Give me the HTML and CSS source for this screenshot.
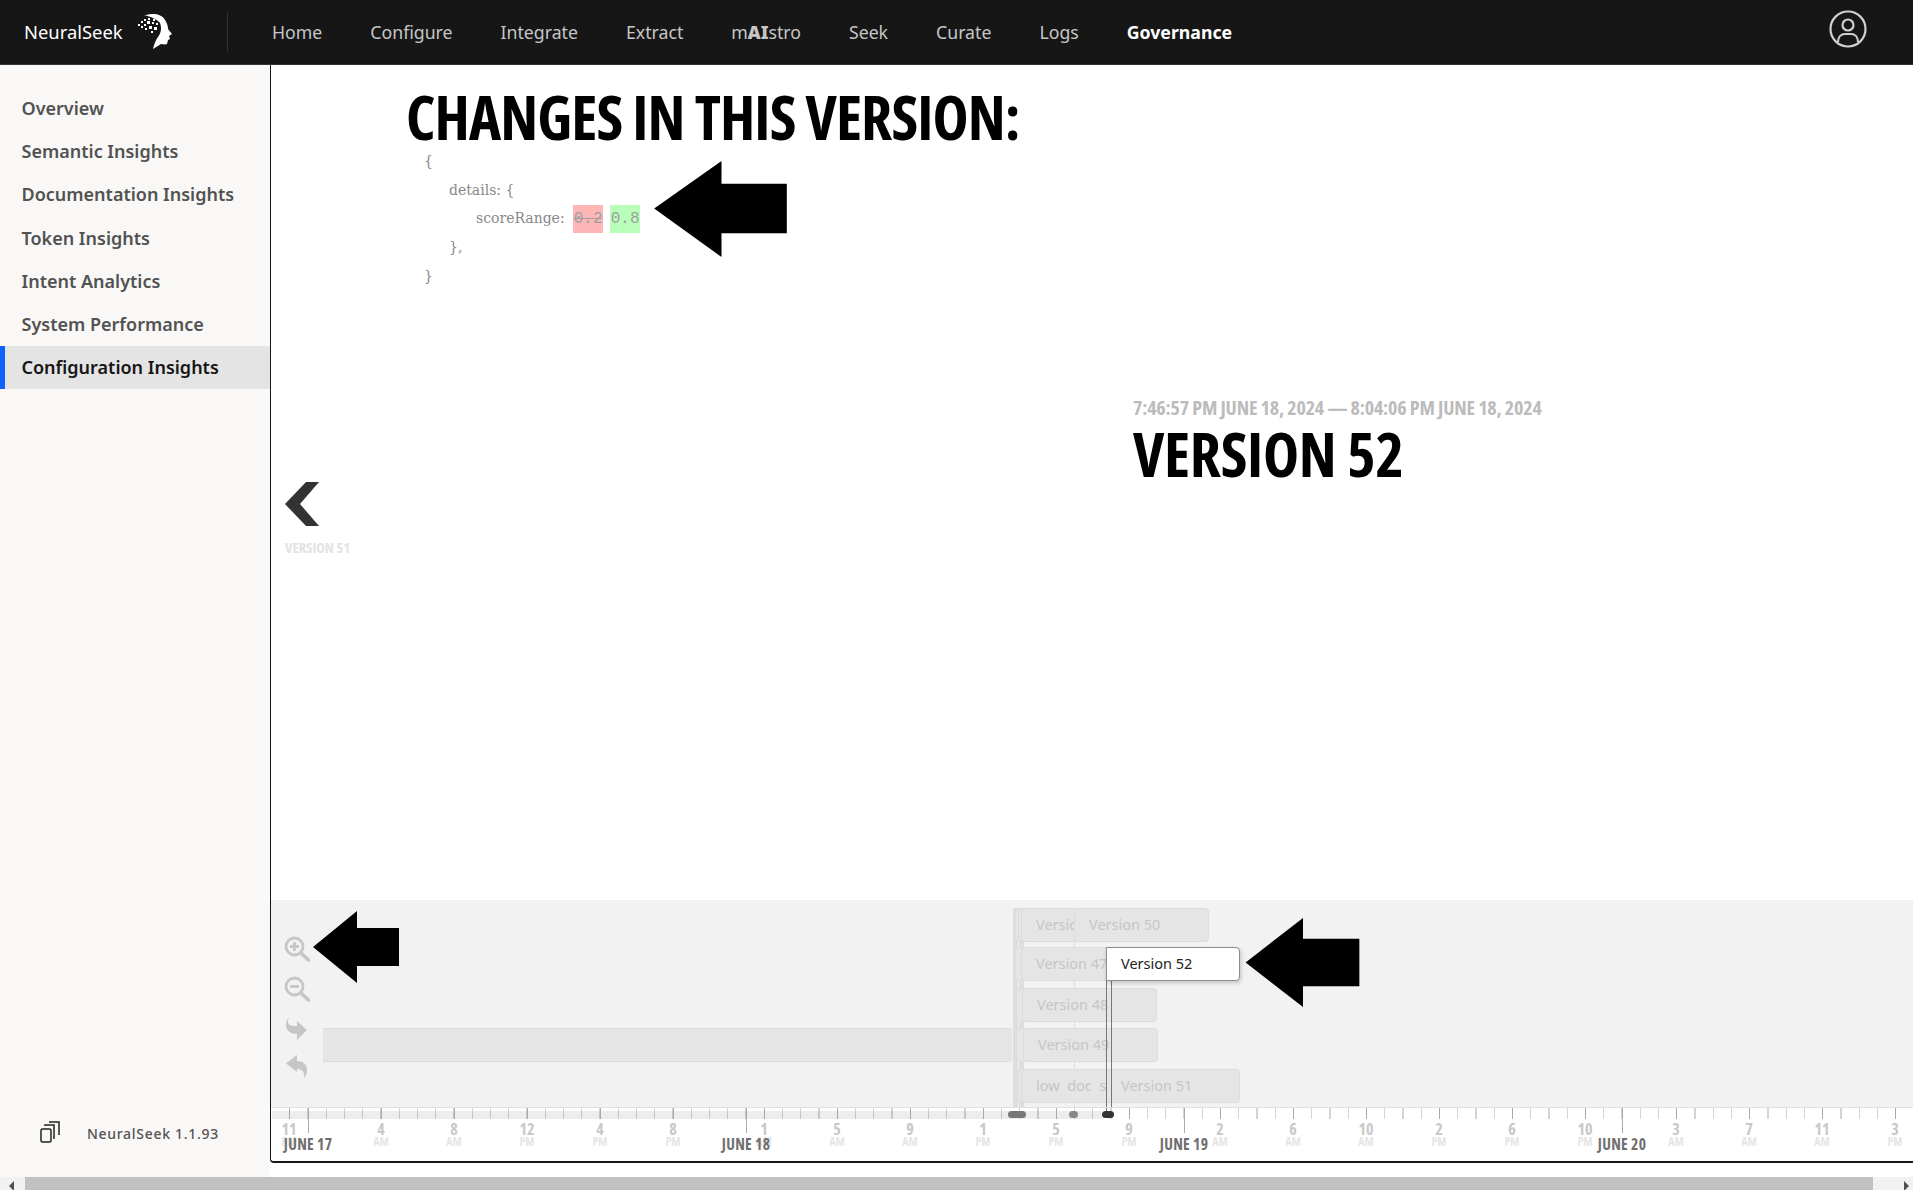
FILE: index.html
```html
<!DOCTYPE html>
<html lang="en">
<head>
    <meta charset="UTF-8">
    <meta name="viewport" content="width=device-width, initial-scale=1.0">
    <title>NeuralSeek - Configuration Insights</title>
    <link rel="stylesheet" href="styles.css">
</head>
<body>
    <!-- Top bar -->
    <header class="topbar">
        <div class="brand">
            <span class="brand-name">NeuralSeek</span>
            <svg class="brand-logo" viewBox="0 0 35 36" width="35" height="36">
                <path fill="#fff" d="M8 1C15-1 24 0 27 6c2 3 3 6 3 9l4 5-3 2 1 3-2 1-1 4c-2 1-4 0-6 0l-8 5c1-4 2-8 5-12 3-4 4-9 2-14-2-3-8-6-16-8z"/>
                <g fill="#fff">
                    <rect x="0" y="10" width="2" height="2"/><rect x="3" y="7" width="2" height="2"/><rect x="3" y="12" width="2" height="2"/>
                    <rect x="6" y="5" width="2" height="2"/><rect x="6" y="10" width="2" height="2"/><rect x="7" y="14" width="2" height="2"/>
                    <rect x="9" y="7" width="3" height="3"/><rect x="10" y="4" width="2" height="2"/><rect x="11" y="12" width="3" height="3"/>
                    <rect x="14" y="8" width="2" height="2"/><rect x="16" y="13" width="3" height="3"/><rect x="15" y="5" width="2" height="2"/>
                    <rect x="13" y="17" width="2" height="2"/><rect x="18" y="9" width="2" height="2"/>
                </g>
            </svg>
        </div>
        <nav class="topnav">
            <a href="#">Home</a>
            <a href="#">Configure</a>
            <a href="#">Integrate</a>
            <a href="#">Extract</a>
            <a href="#">m<b class="ai">AI</b>stro</a>
            <a href="#">Seek</a>
            <a href="#">Curate</a>
            <a href="#">Logs</a>
            <a href="#" class="current">Governance</a>
        </nav>
        <svg class="avatar" viewBox="0 0 40 40" width="40" height="40" fill="none" stroke="#d0d0d0" stroke-width="2.2">
            <circle cx="20" cy="20" r="17.5"/>
            <circle cx="20" cy="16" r="5.5"/>
            <path d="M10 33c0-5 3-8 7-8h6c4 0 7 3 7 8"/>
        </svg>
    </header>

    <div class="page">
        <!-- Sidebar -->
        <aside class="sidebar">
            <a href="#">Overview</a>
            <a href="#">Semantic Insights</a>
            <a href="#">Documentation Insights</a>
            <a href="#">Token Insights</a>
            <a href="#">Intent Analytics</a>
            <a href="#">System Performance</a>
            <a href="#" class="active">Configuration Insights</a>
            <div class="side-footer">
                <svg viewBox="0 0 20 22" width="20" height="22" fill="none" stroke="#222" stroke-width="1.5">
                    <rect x="1" y="8" width="10" height="13" rx="1.5"/>
                    <path d="M5 5V4h9v13h-1"/>
                    <path d="M9 1h10v13"/>
                </svg>
                <span>NeuralSeek 1.1.93</span>
            </div>
        </aside>

        <!-- Content -->
        <main class="main">
            <div class="frame">
                <section class="story">
                    <h1>CHANGES IN THIS VERSION:</h1>
                    <div class="diff">
                        <div>{</div>
                        <div class="in1">details: {</div>
                        <div class="in2">scoreRange: <del>0.2</del><ins>0.8</ins></div>
                        <div class="in1">},</div>
                        <div>}</div>
                    </div>
                    <svg class="callout callout-diff" viewBox="0 0 134 97" width="133" height="96"><path d="M0 48 68 0v23h66v50H68v24z"/></svg>

                    <div class="slide-row">
                        <a href="#" class="prev">
                            <svg viewBox="0 0 34 44" width="34" height="44"><path fill="#333" d="M21 0h13L15 22l19 22H21L0 22z"/></svg>
                            <span>VERSION 51</span>
                        </a>
                        <div class="slide-title">
                            <div class="slide-date">7:46:57 PM JUNE 18, 2024 &mdash; 8:04:06 PM JUNE 18, 2024</div>
                            <h2>VERSION 52</h2>
                        </div>
                    </div>
                </section>

                <!-- Timeline -->
                <section class="timeline">
                    <div class="tl-canvas">
                        <div class="lane-line" style="left:741px;height:200px"></div>
                        <div class="lane-line" style="left:747px;height:200px"></div>
                        <div class="lane-line" style="left:802px;top:42px;height:166px;width:1px"></div>

                        <div class="ver" style="left:743px;top:8px;width:140px"></div>
                        <div class="ver" style="left:746px;top:8px;width:140px"></div>
                        <div class="ver" style="left:749px;top:8px;width:140px">Version 46</div>
                        <div class="ver" style="left:802px;top:8px;width:135px">Version 50</div>

                        <div class="ver" style="left:743px;top:47px;width:130px"></div>
                        <div class="ver" style="left:749px;top:47px;width:136px">Version 47</div>

                        <div class="ver" style="left:744px;top:88px;width:130px"></div>
                        <div class="ver" style="left:750px;top:88px;width:135px">Version 48</div>

                        <div class="ver ver-long" style="left:51px;top:128px;width:689px"></div>
                        <div class="ver" style="left:744px;top:128px;width:130px"></div>
                        <div class="ver" style="left:751px;top:128px;width:135px">Version 49</div>

                        <div class="ver" style="left:745px;top:169px;width:130px"></div>
                        <div class="ver" style="left:749px;top:169px;width:150px">low&nbsp; doc&nbsp; s</div>
                        <div class="ver" style="left:834px;top:169px;width:134px">Version 51</div>

                        <div class="pole" style="left:834px"></div>
                        <div class="pole" style="left:839px"></div>
                        <div class="ver ver-on" style="left:834px;top:47px;width:134px">Version 52</div>
                    </div>

                    <div class="tl-tools">
                        <svg viewBox="0 0 26 26" width="26" height="26" fill="none" stroke="#c6c6c6" stroke-width="2.8">
                            <circle cx="10.5" cy="10.5" r="8.5"/><path d="M17 17l7.5 7" stroke-width="3.6" stroke-linecap="round"/><path d="M10.5 6v9M6 10.5h9"/>
                        </svg>
                        <svg viewBox="0 0 26 26" width="26" height="26" fill="none" stroke="#c6c6c6" stroke-width="2.8">
                            <circle cx="10.5" cy="10.5" r="8.5"/><path d="M17 17l7.5 7" stroke-width="3.6" stroke-linecap="round"/><path d="M6 10.5h9"/>
                        </svg>
                        <svg class="tool-redo" viewBox="0 0 22 24" width="22" height="24"><path fill="#c6c6c6" d="M3 0C1 4 2 7 4 8c2 1 4 1 7 1V4l10 9-10 10v-6C5 17 0 14 0 8c0-3 1-6 3-8z"/></svg>
                        <svg viewBox="0 0 22 24" width="22" height="24"><path fill="#c6c6c6" d="M11 0v6c7 0 10 4 10 9 0 3-1 6-3 8 1-6-2-9-7-9v3L0 8.5z"/></svg>
                    </div>
                    <svg class="callout callout-zoom" viewBox="0 0 86 72" width="86" height="72"><path d="M0 36 44 0v17h42v38H44v17z"/></svg>
                    <svg class="callout callout-ver" viewBox="0 0 115 90" width="115" height="89"><path d="M0 45 58 0v21h57v48H58v21z"/></svg>

                    <div class="axis">
                        <div class="axis-band"></div>
                        <i class="dot" style="left:736px;width:18px;background:#777"></i>
                        <i class="dot" style="left:797px;width:9px;background:#888"></i>
                        <i class="dot" style="left:830px;width:12px;background:#333"></i>

                        <div class="hr" style="left:17px"><b>11</b><small>PM</small></div>
                        <div class="hr" style="left:109px"><b>4</b><small>AM</small></div>
                        <div class="hr" style="left:182px"><b>8</b><small>AM</small></div>
                        <div class="hr" style="left:255px"><b>12</b><small>PM</small></div>
                        <div class="hr" style="left:328px"><b>4</b><small>PM</small></div>
                        <div class="hr" style="left:401px"><b>8</b><small>PM</small></div>
                        <div class="hr" style="left:492px"><b>1</b><small>AM</small></div>
                        <div class="hr" style="left:565px"><b>5</b><small>AM</small></div>
                        <div class="hr" style="left:638px"><b>9</b><small>AM</small></div>
                        <div class="hr" style="left:711px"><b>1</b><small>PM</small></div>
                        <div class="hr" style="left:784px"><b>5</b><small>PM</small></div>
                        <div class="hr" style="left:857px"><b>9</b><small>PM</small></div>
                        <div class="hr" style="left:948px"><b>2</b><small>AM</small></div>
                        <div class="hr" style="left:1021px"><b>6</b><small>AM</small></div>
                        <div class="hr" style="left:1094px"><b>10</b><small>AM</small></div>
                        <div class="hr" style="left:1167px"><b>2</b><small>PM</small></div>
                        <div class="hr" style="left:1240px"><b>6</b><small>PM</small></div>
                        <div class="hr" style="left:1313px"><b>10</b><small>PM</small></div>
                        <div class="hr" style="left:1404px"><b>3</b><small>AM</small></div>
                        <div class="hr" style="left:1477px"><b>7</b><small>AM</small></div>
                        <div class="hr" style="left:1550px"><b>11</b><small>AM</small></div>
                        <div class="hr" style="left:1623px"><b>3</b><small>PM</small></div>

                        <div class="day" style="left:36px"><span>JUNE 17</span></div>
                        <div class="day" style="left:474px"><span>JUNE 18</span></div>
                        <div class="day" style="left:912px"><span>JUNE 19</span></div>
                        <div class="day" style="left:1350px"><span>JUNE 20</span></div>
                    </div>
                </section>
            </div>
        </main>
    </div>

    <!-- Page scrollbar -->
    <div class="hscroll">
        <i class="arrow-l"></i>
        <div class="thumb"></div>
        <i class="arrow-r"></i>
    </div>
</body>
</html>
```

FILE: styles.css
```css
* {
    box-sizing: border-box;
}

html, body {
    margin: 0;
    height: 100%;
}

body {
    display: flex;
    flex-direction: column;
    height: 1190px;
    overflow: hidden;
    background: #fff;
    font-family: "Noto Sans", "Roboto", sans-serif;
}

a {
    text-decoration: none;
    color: inherit;
}

/* Top bar */
.topbar {
    display: flex;
    align-items: center;
    height: 65px;
    flex: none;
    background: #161616;
    border-bottom: 1px solid #333;
}

.brand {
    display: flex;
    align-items: center;
    width: 228px;
    height: 40px;
    padding-left: 24px;
    border-right: 1px solid #333;
}

.brand-name {
    color: #fff;
    font-size: 18.4px;
    width: 114px;
    margin-top: -2px;
}

.topnav {
    display: flex;
    margin-left: 44px;
    gap: 48px;
    font-size: 17.7px;
    color: #c6c6c6;
}

.topnav .ai {
    font-weight: 900;
}

.topnav .current {
    color: #fff;
    font-weight: 700;
}

.avatar {
    margin: 0 45px 6px auto;
}

/* Sidebar */
.page {
    display: flex;
    flex: 1;
    min-height: 0;
}

.sidebar {
    display: flex;
    flex-direction: column;
    width: 270px;
    flex: none;
    padding-top: 22px;
    background: #faf8f6;
}

.sidebar a {
    height: 43.2px;
    line-height: 42px;
    padding-left: 21.5px;
    font-size: 18px;
    font-weight: 600;
    color: #525252;
}

.sidebar a.active {
    padding-left: 16.5px;
    border-left: 5px solid #0f62fe;
    background: #e4e4e4;
    color: #161616;
}

.side-footer {
    display: flex;
    align-items: center;
    gap: 27px;
    margin-top: auto;
    padding: 0 0 34px 40px;
    font-size: 14px;
    font-weight: 500;
    letter-spacing: 0.7px;
    color: #525252;
}

.side-footer span {
    margin-top: 4px;
}

/* Content */
.main {
    flex: 1;
    min-width: 0;
    padding-bottom: 14px;
}

.frame {
    display: flex;
    flex-direction: column;
    height: 100%;
    border-left: 1px solid #161616;
    border-bottom: 2px solid #161616;
    border-bottom-left-radius: 4px;
}

.story {
    position: relative;
    flex: 1;
    padding: 19px 0 0 135px;
}

h1 {
    margin: 0;
    font-family: "Open Sans", sans-serif;
    font-stretch: 75%;
    font-size: 61px;
    letter-spacing: -0.9px;
    line-height: 66px;
    font-weight: 700;
    color: #000;
}

.diff {
    margin: -3px 0 0 18px;
    font-family: "DejaVu Serif", serif;
    font-size: 14px;
    line-height: 28.5px;
    color: #888;
}

.in1 {
    padding-left: 25px;
}

.in2 {
    padding-left: 52px;
}

.diff del, .diff ins {
    display: inline-block;
    width: 30px;
    height: 28px;
    margin-top: 1px;
    margin-left: 4px;
    vertical-align: top;
    text-align: center;
    font-family: "Liberation Mono", monospace;
    font-size: 16px;
    color: #a0a0a0;
}

.diff del {
    background: #ffb6b6;
}

.diff ins {
    margin-left: 7px;
    background: #b9ffb9;
    text-decoration: none;
}

.callout {
    position: absolute;
    fill: #000;
}

.callout-diff {
    left: 383px;
    top: 96px;
}

.slide-row {
    display: flex;
    margin: 104px 0 0 -135px;
}

.prev {
    display: flex;
    flex-direction: column;
    gap: 12px;
    width: 862px;
    padding: 88px 0 0 14px;
    font-family: "Open Sans", sans-serif;
    font-stretch: 75%;
    font-size: 14.5px;
    font-weight: 700;
    color: #e3e3e3;
}

.slide-date {
    font-family: "Open Sans", sans-serif;
    font-stretch: 75%;
    font-size: 20px;
    letter-spacing: -0.2px;
    font-weight: 700;
    color: #bcbcbc;
}

h2 {
    margin: 1px 0 0;
    font-family: "Open Sans", sans-serif;
    font-stretch: 75%;
    font-size: 61px;
    letter-spacing: -0.3px;
    line-height: 64px;
    font-weight: 700;
    color: #000;
}

/* Timeline */
.timeline {
    position: relative;
    height: 261px;
    flex: none;
    background: linear-gradient(#f2f2f2, #f2f2f2) top / 100% 208px no-repeat;
}

.tl-canvas {
    position: absolute;
    inset: 0 0 0 1px;
}

.ver {
    position: absolute;
    height: 34px;
    padding-left: 14px;
    overflow: hidden;
    background: #e5e5e5;
    border: 1px solid #dcdcdc;
    border-radius: 4px;
    font-family: "Noto Sans", sans-serif;
    font-size: 14.5px;
    line-height: 30px;
    white-space: nowrap;
    color: #c6c6c6;
}

.ver-long {
    border-width: 1px 0;
    border-radius: 0 4px 4px 0;
}

.ver-on {
    background: #fff;
    border-color: #8d8d8d;
    border-radius: 0 4px 4px 0;
    box-shadow: 1px 2px 4px rgba(0, 0, 0, 0.2);
    color: #222;
}

.lane-line {
    position: absolute;
    top: 8px;
    width: 5px;
    background: #dedede;
}

.pole {
    position: absolute;
    top: 80px;
    width: 1px;
    height: 131px;
    background: #777;
}

.tl-tools {
    position: absolute;
    left: 13px;
    top: 36px;
    display: flex;
    flex-direction: column;
    align-items: center;
    width: 26px;
    gap: 13.5px;
}

.tool-redo {
    margin-top: 2px;
}

.callout-zoom {
    left: 42px;
    top: 11px;
}

.callout-ver {
    left: 974px;
    top: 18px;
}

.axis {
    position: absolute;
    left: 1px;
    right: 0;
    top: 207px;
    height: 54px;
    border-top: 1px solid #e0e0e0;
    background: repeating-linear-gradient(90deg, #d4d4d4 0 1px, transparent 1px 18.25px) -1px 0 / 100% 11px no-repeat;
}

.axis-band {
    position: absolute;
    left: 0;
    top: 3px;
    width: 830px;
    height: 8px;
    background: rgba(0, 0, 0, 0.07);
}

.dot {
    position: absolute;
    top: 3px;
    height: 7px;
    border-radius: 4px;
}

.hr, .day {
    position: absolute;
    top: 0;
    width: 0;
    font-family: "Open Sans", sans-serif;
    font-stretch: 75%;
    text-align: center;
}

.hr::before, .day::before {
    content: "";
    position: absolute;
    left: 0;
    top: 0;
    width: 1px;
    height: 11px;
    background: #aaa;
}

.day::before {
    height: 25px;
}

.hr b, .hr small, .day span {
    position: absolute;
    left: -30px;
    width: 60px;
}

.hr b {
    top: 12px;
    font-size: 16px;
    line-height: 18px;
    color: #c8c8c8;
}

.hr small {
    top: 27px;
    font-size: 12px;
    font-weight: 700;
    line-height: 13px;
    color: #e6e6e6;
}

.day span {
    top: 27px;
    font-size: 15.5px;
    letter-spacing: 0.3px;
    font-weight: 700;
    line-height: 18px;
    color: #6f6f6f;
}

/* Page scrollbar */
.hscroll {
    display: flex;
    align-items: flex-start;
    height: 13px;
    flex: none;
    overflow: hidden;
    background: #f1f1f1;
    padding-left: 25px;
    position: relative;
}

.thumb {
    width: 1848px;
    height: 13px;
    background: #c1c1c1;
}

.arrow-l, .arrow-r {
    position: absolute;
    top: 4px;
    width: 0;
    height: 0;
    border-top: 5px solid transparent;
    border-bottom: 5px solid transparent;
}

.arrow-l {
    left: 9px;
    border-right: 5px solid #505050;
}

.arrow-r {
    right: 4px;
    border-left: 5px solid #505050;
}
```
